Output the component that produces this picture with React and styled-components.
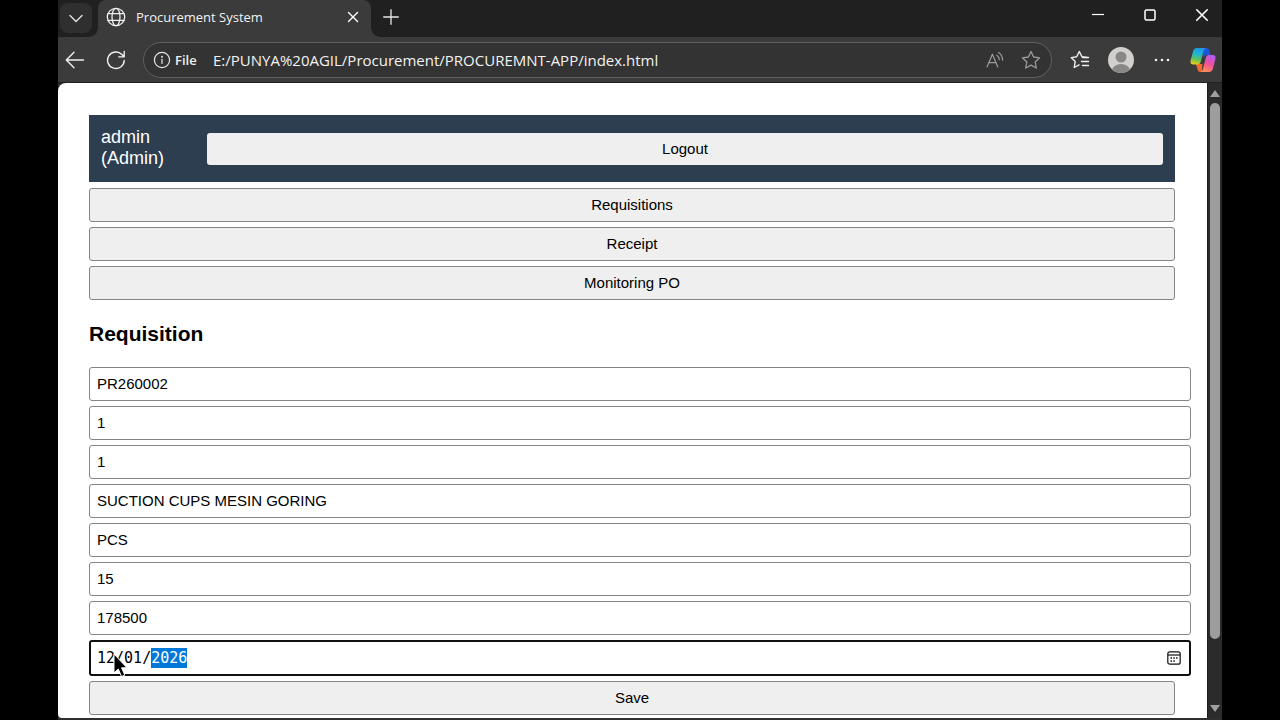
import React, { useState } from 'react'
import styled, { createGlobalStyle } from 'styled-components'

const menus = ['Requisitions', 'Receipt', 'Monitoring PO']

const fields = [
  { name: 'prNumber', label: 'PR Number', value: 'PR260002' },
  { name: 'line', label: 'Line', value: '1' },
  { name: 'item', label: 'Item', value: '1' },
  { name: 'description', label: 'Description', value: 'SUCTION CUPS MESIN GORING' },
  { name: 'unit', label: 'Unit', value: 'PCS' },
  { name: 'qty', label: 'Qty', value: '15' },
  { name: 'price', label: 'Price', value: '178500' },
]

const ChevronIcon = () => (
  <svg width="16" height="16" viewBox="0 0 16 16" fill="none" stroke="#e4e4e4" strokeWidth="1.3" strokeLinecap="round">
    <path d="M2 5.5 8 11.500l6-6" />
  </svg>
)

const GlobeIcon = () => (
  <svg width="20" height="20" viewBox="0 0 20 20" fill="none" stroke="#f0f0f0" strokeWidth="1.3">
    <circle cx="10" cy="10" r="8.7" />
    <ellipse cx="10" cy="10" rx="4" ry="8.7" />
    <path d="M2 6.7h16M2 13.3h16" />
  </svg>
)

const CrossIcon = ({ size = 12, width = 1.4 }) => (
  <svg width={size} height={size} viewBox="0 0 12 12" fill="none" stroke="#fff" strokeWidth={width} strokeLinecap="round">
    <path d="M1.5 1.5l9 9M10.5 1.5l-9 9" />
  </svg>
)

const PlusIcon = () => (
  <svg width="16" height="16" viewBox="0 0 16 16" fill="none" stroke="#e8e8e8" strokeWidth="1.3" strokeLinecap="round">
    <path d="M8 .7v14.6M.7 8h14.6" />
  </svg>
)

const BackIcon = () => (
  <svg width="20" height="20" viewBox="0 0 20 20" fill="none" stroke="#f0f0f0" strokeWidth="1.4" strokeLinecap="round" strokeLinejoin="round">
    <path d="M18.5 10H1.5M9 2.3 1.3 10 9 17.7" />
  </svg>
)

const ReloadIcon = () => (
  <svg width="20" height="20" viewBox="0 0 20 20" fill="none" stroke="#f0f0f0" strokeWidth="1.4" strokeLinecap="round" strokeLinejoin="round">
    <path d="M18.2 10.5A8.3 8.3 0 1 1 15.9 4.5L18 6.8M18.2 1.5v5.4h-5.4" />
  </svg>
)

const InfoIcon = () => (
  <svg width="18" height="18" viewBox="0 0 18 18" fill="none" stroke="#e4e4e4" strokeWidth="1.2" strokeLinecap="round">
    <circle cx="9" cy="9" r="7.6" />
    <path d="M9 8.3v4.2" />
    <circle cx="9" cy="5.7" r=".4" fill="#e4e4e4" />
  </svg>
)

const ReadAloudIcon = () => (
  <svg width="18" height="18" viewBox="0 0 18 18" fill="none" stroke="#9b9b9b" strokeWidth="1.2" strokeLinecap="round" strokeLinejoin="round">
    <path d="M1 16 6.400 3.200 11.800 16M2.900 11.600h7" />
    <path d="M10.800 4.200c1.600 1 2.400 2.600 2.400 4.600M12.400 1.400c2.700 1.600 4.200 4.200 4.200 7.800" />
  </svg>
)

const StarIcon = () => (
  <svg width="20" height="20" viewBox="0 0 20 20" fill="none" stroke="#9b9b9b" strokeWidth="1.3" strokeLinejoin="round">
    <path d="M10 1.500l2.600 5.500 6 .8-4.400 4.200 1.100 6L10 15.100 4.700 18l1.100-6L1.400 7.800l6-.8z" />
  </svg>
)

const FavoritesIcon = () => (
  <svg width="20" height="20" viewBox="0 0 20 20" fill="none" stroke="#f0f0f0" strokeWidth="1.4" strokeLinecap="round" strokeLinejoin="round">
    <path d="M17 7.500l-5-.7L9.300 1.500 6.700 6.800 1.200 7.600l4 4-1 5.900 4.900-2.600" />
    <path d="M12.500 7.500h6M11.500 11.500h7M12.500 15.500h6" />
  </svg>
)

const AvatarIcon = () => (
  <svg width="26" height="26" viewBox="0 0 26 26">
    <clipPath id="avatar">
      <circle cx="13" cy="13" r="13" />
    </clipPath>
    <g clipPath="url(#avatar)">
      <rect width="26" height="26" fill="#d2d0ce" />
      <circle cx="13" cy="10" r="5.500" fill="#8a8886" />
      <ellipse cx="13" cy="23.500" rx="9" ry="6.500" fill="#8a8886" />
    </g>
  </svg>
)

const DotsIcon = () => (
  <svg width="16" height="4" viewBox="0 0 16 4" fill="#f0f0f0">
    <circle cx="2" cy="2" r="1.300" />
    <circle cx="8" cy="2" r="1.300" />
    <circle cx="14" cy="2" r="1.300" />
  </svg>
)

const CopilotIcon = () => (
  <svg width="26" height="26" viewBox="0 0 26 26">
    <defs>
      <linearGradient id="copilotLeft" x1=".6" y1="0" x2=".4" y2="1">
        <stop offset="0" stopColor="#2196ea" />
        <stop offset=".4" stopColor="#20b6cf" />
        <stop offset=".7" stopColor="#5fc35a" />
        <stop offset="1" stopColor="#e8cc1c" />
      </linearGradient>
      <linearGradient id="copilotRight" x1=".7" y1="0" x2=".3" y2="1">
        <stop offset="0" stopColor="#b35cf0" />
        <stop offset=".5" stopColor="#f0509c" />
        <stop offset="1" stopColor="#ff9152" />
      </linearGradient>
    </defs>
    <path d="M13 1h3c2 0 2.900 1 3.400 2.700L20.500 8H16l-3 2z" fill="#1d55d8" />
    <path d="M6 17h6.500l-.5 8h-1.500c-1.700 0-2.500-.8-3-2.500z" fill="#f5682c" />
    <path d="M7 1h9.500c-1.700.2-2.500 1.300-3 3l-2.700 10.500c-.6 2-1.600 3-3.500 3H3.500c-2.500 0-3.500-1.500-2.900-4L3 4.500C3.600 2.200 4.800 1 7 1z" fill="url(#copilotLeft)" />
    <path d="M19 25H10c1.700-.2 2.500-1.300 3-3l2.700-11c.6-2 1.600-3 3.500-3h3.300c2.500 0 3.500 1.500 2.900 4L23 21.500c-.6 2.300-1.800 3.500-4 3.500z" fill="url(#copilotRight)" />
  </svg>
)

const CalendarIcon = () => (
  <svg width="14" height="14" viewBox="0 0 14 14" fill="none" stroke="#111" strokeWidth="1.200">
    <rect x=".8" y=".8" width="12.400" height="12.400" rx="2" />
    <path d="M1 4h12" />
    <path d="M3.500 7h1.500M6.300 7h1.500M9.100 7h1.500M3.500 10h1.500M6.300 10h1.500" strokeWidth="1.500" />
  </svg>
)

const PointerIcon = () => (
  <svg width="16" height="26" viewBox="0 0 16 26">
    <path d="M1 1v19l4.300-4 3.200 7.500 3.300-1.400-3.200-7.300H14z" fill="#000" stroke="#fff" strokeWidth="1" />
  </svg>
)

const App = () => {
  const [values, setValues] = useState(Object.fromEntries(fields.map((f) => [f.name, f.value])))
  const [url, setUrl] = useState('E:/PUNYA%20AGIL/Procurement/PROCUREMNT-APP/index.html')

  const handleChange = (e) => {
    setValues({ ...values, [e.target.name]: e.target.value })
  }

  return (
    <>
      <GlobalStyle />
      <Browser>
        <TabStrip>
          <TabMenu aria-label="Tab actions">
            <ChevronIcon />
          </TabMenu>
          <Tab>
            <GlobeIcon />
            <TabTitle>Procurement System</TabTitle>
            <IconButton $size={20} aria-label="Close tab">
              <CrossIcon />
            </IconButton>
          </Tab>
          <NewTab aria-label="New tab">
            <PlusIcon />
          </NewTab>
          <WindowControls>
            <IconButton $size={20} aria-label="Minimize">
              <svg width="12" height="12" viewBox="0 0 12 12">
                <path d="M0 5.500h12" stroke="#fff" strokeWidth="1.200" />
              </svg>
            </IconButton>
            <IconButton $size={20} aria-label="Maximize">
              <svg width="12" height="12" viewBox="0 0 12 12">
                <rect x="1" y="1" width="10" height="10" rx="1.500" fill="none" stroke="#fff" strokeWidth="1.500" />
              </svg>
            </IconButton>
            <IconButton $size={20} aria-label="Close">
              <CrossIcon size={14} />
            </IconButton>
          </WindowControls>
        </TabStrip>

        <Toolbar>
          <NavButtons>
            <IconButton $size={20} aria-label="Back">
              <BackIcon />
            </IconButton>
            <IconButton $size={20} aria-label="Reload">
              <ReloadIcon />
            </IconButton>
          </NavButtons>
          <AddressBar>
            <InfoIcon />
            <Scheme>File</Scheme>
            <AddressInput aria-label="Address" value={url} onChange={(e) => setUrl(e.target.value)} />
            <IconButton $size={20} aria-label="Read aloud">
              <ReadAloudIcon />
            </IconButton>
            <IconButton $size={20} aria-label="Add to favorites">
              <StarIcon />
            </IconButton>
          </AddressBar>
          <ToolbarActions>
            <IconButton $size={26} aria-label="Favorites">
              <FavoritesIcon />
            </IconButton>
            <IconButton $size={26} aria-label="Profile">
              <AvatarIcon />
            </IconButton>
            <IconButton $size={26} aria-label="Settings">
              <DotsIcon />
            </IconButton>
            <IconButton $size={26} aria-label="Copilot">
              <CopilotIcon />
            </IconButton>
          </ToolbarActions>
        </Toolbar>

        <Viewport>
          <Page>
            <UserBar>
              <UserName>admin (Admin)</UserName>
              <LogoutButton>Logout</LogoutButton>
            </UserBar>
            <Menu>
              {menus.map((menu) => (
                <Button key={menu}>{menu}</Button>
              ))}
            </Menu>
            <Title>Requisition</Title>
            <Form onSubmit={(e) => e.preventDefault()}>
              {fields.map((f) => (
                <Input key={f.name} name={f.name} aria-label={f.label} value={values[f.name]} onChange={handleChange} />
              ))}
              <DateField role="group" aria-label="Date">
                <DatePart aria-label="Day" defaultValue="12" $chars={2} />
                <span>/</span>
                <DatePart aria-label="Month" defaultValue="01" $chars={2} />
                <span>/</span>
                <DatePart aria-label="Year" defaultValue="2026" $chars={4} $selected />
                <PickerButton type="button" aria-label="Open calendar">
                  <CalendarIcon />
                </PickerButton>
                <Pointer>
                  <PointerIcon />
                </Pointer>
              </DateField>
              <Button type="submit">Save</Button>
            </Form>
          </Page>
          <ScrollBar>
            <ScrollArrow />
            <ScrollTrack>
              <ScrollThumb />
            </ScrollTrack>
            <ScrollArrow $down />
          </ScrollBar>
        </Viewport>
      </Browser>
    </>
  )
}

const GlobalStyle = createGlobalStyle`
  * {
    box-sizing: border-box;
  }

  body {
    margin: 0;
    background-color: #000;
    font-family: "Liberation Sans", Arial, sans-serif;
  }

  button {
    font-family: inherit;
    color: #000;
  }
`

const Browser = styled.div`
  display: flex;
  flex-direction: column;
  height: 100vh;
  margin: 0 58px;
  padding-bottom: 2px;
  overflow: hidden;
  background-color: #2f2f2f;
  font-family: "Open Sans", "Noto Sans", sans-serif;
`

const TabStrip = styled.div`
  display: flex;
  flex: none;
  height: 37px;
  background-color: #202020;
`

const IconButton = styled.button`
  display: flex;
  flex: none;
  align-items: center;
  justify-content: center;
  width: ${(props) => props.$size}px;
  height: ${(props) => props.$size}px;
  padding: 0;
  border: none;
  background: none;
`

const TabMenu = styled.button`
  display: flex;
  align-items: center;
  justify-content: center;
  width: 32px;
  height: 30px;
  margin: 3px 6px 0 2px;
  padding: 0;
  border: none;
  border-radius: 8px;
  background-color: #2f2f2f;
`

const Tab = styled.div`
  position: relative;
  display: flex;
  align-items: center;
  gap: 10px;
  width: 273px;
  padding: 0 8px 3px;
  border-radius: 8px 8px 0 0;
  background-color: #3b3b3b;

  /* curved feet on both sides of the tab */
  &::before,
  &::after {
    content: '';
    position: absolute;
    bottom: 0;
    width: 8px;
    height: 8px;
  }

  &::before {
    right: 100%;
    background: radial-gradient(circle at 0 0, transparent 7px, #3b3b3b 8px);
  }

  &::after {
    left: 100%;
    background: radial-gradient(circle at 100% 0, transparent 7px, #3b3b3b 8px);
  }
`

const TabTitle = styled.span`
  flex: 1;
  color: #f2f2f2;
  font-size: 13px;
`

const NewTab = styled(IconButton)`
  width: 40px;
  height: 34px;
`

const WindowControls = styled.div`
  display: flex;
  gap: 32px;
  margin-left: auto;
  padding: 5px 10px 0 0;
`

const Toolbar = styled.div`
  display: flex;
  flex: none;
  align-items: center;
  height: 46px;
  border-bottom: 1px solid #222;
  background-color: #3b3b3b;
`

const NavButtons = styled.div`
  display: flex;
  gap: 21px;
  padding: 0 17px 0 7px;
`

const AddressBar = styled.div`
  display: flex;
  flex: 1;
  align-items: center;
  height: 36px;
  padding: 0 10px 0 9px;
  border: 1px solid #606060;
  border-radius: 18px;
  background-color: #333;

  ${IconButton} + ${IconButton} {
    margin-left: 16px;
  }
`

const Scheme = styled.span`
  width: 38px;
  margin-left: 4px;
  color: #f0f0f0;
  font-size: 13px;
  font-weight: 600;
`

const AddressInput = styled.input`
  flex: 1;
  min-width: 0;
  padding: 0;
  border: none;
  outline: none;
  background: none;
  color: #f2f2f2;
  font-family: inherit;
  font-size: 15px;
`

const ToolbarActions = styled.div`
  display: flex;
  align-items: center;
  gap: 15px;
  padding: 0 6px 0 15px;
`

const Viewport = styled.div`
  display: flex;
  flex: 1;
  min-height: 0;
  background-color: #2b2b2b;
`

const Page = styled.main`
  flex: 1;
  padding: 32px 32px 0 31px;
  overflow: hidden;
  border-radius: 8px 0 0 4px;
  background-color: #fff;
  color: #000;
  font-family: "Liberation Sans", Arial, sans-serif;
`

const UserBar = styled.header`
  display: flex;
  align-items: center;
  padding: 11px 12px;
  background-color: #2c3e50;
  color: #fff;
`

const UserName = styled.div`
  flex: none;
  width: 106px;
  padding: 0 36px 2px 0;
  font-size: 18px;
  line-height: 21px;
`

const Button = styled.button`
  display: block;
  width: 100%;
  height: 34px;
  padding: 0 7px 1px;
  border: 1px solid #858585;
  border-radius: 3px;
  background-color: #efefef;
  font-size: 15px;
`

const LogoutButton = styled(Button)`
  height: 32px;
  margin: 7px 0 6px;
  border: none;
`

const Menu = styled.nav`
  display: flex;
  flex-direction: column;
  gap: 5px;
  margin-top: 6px;
`

const Title = styled.h2`
  margin: 22px 0 21px;
  font-size: 21px;
  line-height: 24px;
`

const Form = styled.form`
  display: flex;
  flex-direction: column;
  gap: 5px;
`

const Input = styled.input`
  width: calc(100% + 16px);
  height: 34px;
  padding: 0 7px 1px;
  border: 1px solid #858585;
  border-radius: 3px;
  background-color: #fff;
  color: #000;
  font-family: inherit;
  font-size: 15px;
`

const DateField = styled.div`
  position: relative;
  display: flex;
  align-items: center;
  width: calc(100% + 16px);
  height: 36px;
  padding: 0 8px 0 6px;
  border: 2px solid #101010;
  border-radius: 3px;
  font-family: "DejaVu Sans Mono", monospace;
  font-size: 15px;
`

const DatePart = styled.input`
  width: ${(props) => props.$chars}ch;
  height: 20px;
  padding: 0;
  border: none;
  outline: none;
  background-color: ${(props) => (props.$selected ? '#0078d7' : 'transparent')};
  color: ${(props) => (props.$selected ? '#fff' : '#000')};
  font: inherit;
`

const PickerButton = styled(IconButton)`
  width: 14px;
  height: 14px;
  margin-left: auto;
`

const Pointer = styled.div`
  position: absolute;
  top: 11px;
  left: 22px;
  pointer-events: none;
`

const ScrollBar = styled.div`
  display: flex;
  flex-direction: column;
  flex: none;
  align-items: center;
  width: 15px;
  padding: 7px 0 6px;
  border-left: 1px solid #1c1c1c;
`

const ScrollArrow = styled.div`
  width: 0;
  height: 0;
  border: solid transparent;
  border-width: ${(props) => (props.$down ? '7px 5px 0' : '0 5px 7px')};
  border-${(props) => (props.$down ? 'top' : 'bottom')}-color: #a0a0a0;
`

const ScrollTrack = styled.div`
  flex: 1;
  padding: 6px 0;
`

const ScrollThumb = styled.div`
  width: 10px;
  height: 90%;
  border-radius: 5px;
  background-color: #9d9d9d;
`

export default App
